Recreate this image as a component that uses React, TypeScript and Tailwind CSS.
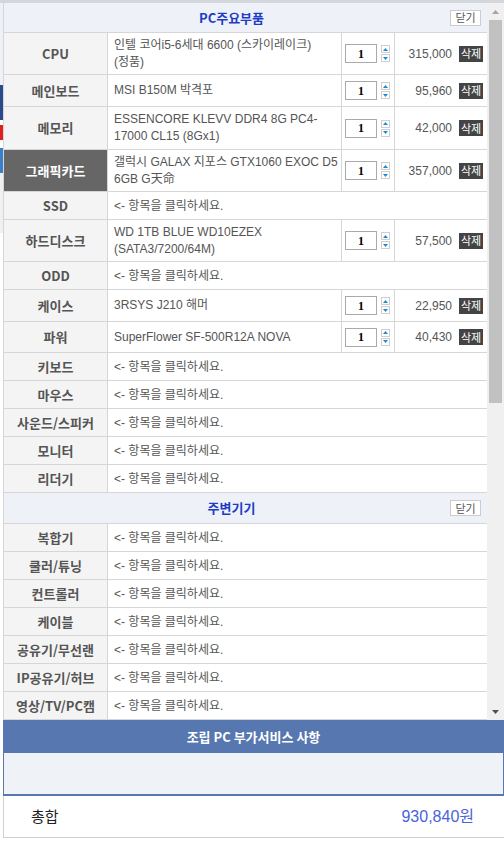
import React from "react";

type Row = {
  label: string;
  name?: string;
  price?: string;
  h: number;
  selected?: boolean;
};

const main: Row[] = [
  { label: "CPU", name: "인텔 코어i5-6세대 6600 (스카이레이크) (정품)", price: "315,000", h: 42 },
  { label: "메인보드", name: "MSI B150M 박격포", price: "95,960", h: 32 },
  { label: "메모리", name: "ESSENCORE KLEVV DDR4 8G PC4-17000 CL15 (8Gx1)", price: "42,000", h: 43 },
  { label: "그래픽카드", name: "갤럭시 GALAX 지포스 GTX1060 EXOC D5 6GB G天命", price: "357,000", h: 42, selected: true },
  { label: "SSD", h: 28 },
  { label: "하드디스크", name: "WD 1TB BLUE WD10EZEX (SATA3/7200/64M)", price: "57,500", h: 42 },
  { label: "ODD", h: 28 },
  { label: "케이스", name: "3RSYS J210 해머", price: "22,950", h: 32 },
  { label: "파워", name: "SuperFlower SF-500R12A NOVA", price: "40,430", h: 31 },
  { label: "키보드", h: 28 },
  { label: "마우스", h: 28 },
  { label: "사운드/스피커", h: 28 },
  { label: "모니터", h: 28 },
  { label: "리더기", h: 28 },
];

const extra: Row[] = [
  { label: "복합기", h: 28 },
  { label: "쿨러/튜닝", h: 28 },
  { label: "컨트롤러", h: 28 },
  { label: "케이블", h: 28 },
  { label: "공유기/무선랜", h: 28 },
  { label: "IP공유기/허브", h: 28 },
  { label: "영상/TV/PC캠", h: 28 },
];

const FONT = { fontFamily: '"Liberation Sans", "Noto Sans CJK KR", "Noto Sans", sans-serif' };
const LABEL_FONT = { fontFamily: '"Noto Sans CJK KR", "Noto Sans", sans-serif' };

function Spinner() {
  return (
    <div className="flex flex-col gap-[1px] ml-[4px]">
      <div className="w-[9px] h-[8px] border border-[#cfcfcf] bg-white flex items-center justify-center">
        <svg width="5" height="3" viewBox="0 0 5 3"><path d="M2.5 0 L5 3 L0 3 Z" fill="#1a8ad6" /></svg>
      </div>
      <div className="w-[9px] h-[8px] border border-[#cfcfcf] bg-white flex items-center justify-center">
        <svg width="5" height="3" viewBox="0 0 5 3"><path d="M0 0 L5 0 L2.5 3 Z" fill="#1a8ad6" /></svg>
      </div>
    </div>
  );
}

function TableRow({ r }: { r: Row }) {
  return (
    <div className="flex border-b border-[#d6d6d6]" style={{ height: r.h }}>
      <div
        className={
          "w-[104px] shrink-0 flex items-center justify-center border-r border-[#d6d6d6] text-[13px] font-bold " +
          (r.selected ? "bg-[#666666] text-white" : "bg-[#f4f4f4] text-[#555555]")
        }
        style={LABEL_FONT}
      >
        {r.label}
      </div>
      {r.name ? (
        <>
          <div className="w-[234px] shrink-0 flex items-center pl-[6px] pr-[1px] border-r border-[#d6d6d6] text-[12px] leading-[17px] text-[#555555] bg-white break-keep">
            <span>{r.name}</span>
          </div>
          <div className="w-[53px] shrink-0 flex items-center pl-[3px] border-r border-[#d6d6d6] bg-white">
            <div className="w-[32px] h-[19px] border border-[#aaaaaa] bg-white flex items-center justify-center text-[12px] text-black" style={{ fontFamily: '"Liberation Serif", serif', fontWeight: 600 }}>
              1
            </div>
            <Spinner />
          </div>
          <div className="flex-1 flex items-center justify-end pr-[4px] bg-white">
            <span className="text-[12px] text-[#555555]">{r.price}</span>
            <span className="ml-[7px] w-[24px] h-[16px] bg-[#444444] text-white text-[11px] flex items-center justify-center" style={LABEL_FONT}>삭제</span>
          </div>
        </>
      ) : (
        <div className="flex-1 flex items-center px-[6px] text-[12px] text-[#555555] bg-white">&lt;- 항목을 클릭하세요.</div>
      )}
    </div>
  );
}

function SectionHeader({ title, h }: { title: string; h: number }) {
  return (
    <div className="flex items-center bg-[#eef2f8] border-b border-[#d6d6d6] pr-[6px]" style={{ height: h }}>
      <div className="flex-1 text-center pl-[13px] text-[13px] font-bold text-[#1f3dc4]" style={LABEL_FONT}>{title}</div>
      <div className="ml-[4px] w-[31px] h-[16px] border border-[#cccccc] bg-white text-[11px] text-[#555555] flex items-center justify-center" style={LABEL_FONT}>닫기</div>
    </div>
  );
}

export default function App() {
  return (
    <div className="w-[504px] h-[849px] bg-white flex overflow-hidden" style={FONT}>
      <div className="w-[3px] shrink-0 flex flex-col">
        <div className="h-[3px] bg-[#d3d6db]" />
        <div className="h-[82px] bg-[#eef1f6]" />
        <div className="h-[35px] bg-[#2b4a8c]" />
        <div className="h-[5px] bg-white" />
        <div className="h-[15px] bg-[#e0201c]" />
        <div className="h-[8px] bg-white" />
        <div className="h-[25px] bg-[#3a80c8]" />
        <div className="h-[60px] bg-[#f0f0f0]" />
        <div className="flex-1 bg-white" />
      </div>
      <div className="flex-1 flex flex-col">
        <div className="h-[3px] bg-[#d3d6db]" />
        <div className="h-[717px] flex">
          <div className="w-[484px] overflow-hidden border-l border-[#d6d6d6]">
            <SectionHeader title="PC주요부품" h={30} />
            {main.map((r) => (
              <TableRow key={r.label} r={r} />
            ))}
            <SectionHeader title="주변기기" h={31} />
            {extra.map((r) => (
              <TableRow key={r.label} r={r} />
            ))}
          </div>
          <div className="w-[17px] bg-[#f0f0f0] flex flex-col items-center">
            <div className="h-[17px] flex items-center justify-center">
              <svg width="7" height="4" viewBox="0 0 7 4"><path d="M3.5 0 L7 4 L0 4 Z" fill="#a3a3a3" /></svg>
            </div>
            <div className="w-[13px] h-[383px] bg-[#c1c1c1]" />
            <div className="flex-1" />
            <div className="h-[17px] flex items-center justify-center">
              <svg width="7" height="4" viewBox="0 0 7 4"><path d="M0 0 L7 0 L3.5 4 Z" fill="#505050" /></svg>
            </div>
          </div>
        </div>
        <div className="h-[33px] bg-[#5677b0] flex items-center justify-center text-white text-[13px] font-bold" style={LABEL_FONT}>
          조립 PC 부가서비스 사항
        </div>
        <div className="h-[43px] bg-[#eff2f7] border-l border-r border-b-[2px] border-[#5677b0]" />
        <div className="h-[42px] flex items-center justify-between pl-[27px] pr-[30px] border-l border-b border-[#d0d0d0] bg-white">
          <span className="text-[15px] text-[#222222]" style={LABEL_FONT}>총합</span>
          <span className="text-[16px] text-[#4a63d8]">930,840원</span>
        </div>
        <div className="flex-1" />
      </div>
    </div>
  );
}
